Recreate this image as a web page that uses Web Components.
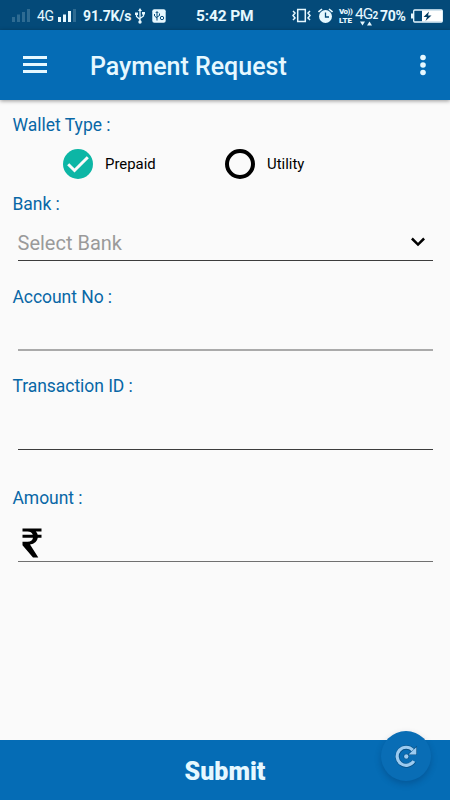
<!DOCTYPE html>
<html lang="en">
<head>
<meta charset="UTF-8">
<meta name="viewport" content="width=device-width, initial-scale=1.0">
<title>Payment Request</title>
<style>
    html, body {
        margin: 0;
        height: 100%;
        overflow: hidden;
        font-family: Roboto, "Noto Sans", sans-serif;
        background: #fafafa;
    }
</style>
</head>
<body>
<payment-page></payment-page>

<script>
class StatusBar extends HTMLElement {
    constructor() {
        super();
        this.attachShadow({ mode: 'open' });
    }

    connectedCallback() {
        this.shadowRoot.innerHTML = `
            <style>
                :host {
                    display: flex;
                    align-items: center;
                    box-sizing: border-box;
                    height: 30px;
                    padding: 1px 6px 0 12px;
                    background: #044a79;
                    color: #e6f8ff;
                    white-space: nowrap;
                }
                svg { display: block; flex: none; }
                span { flex: none; line-height: 16px; }
                .net { width: 21px; margin-left: 7px; font-size: 14px; letter-spacing: -0.3px; padding-top: 1px; }
                .speed { width: 49px; margin-left: 6px; font-size: 14px; letter-spacing: -0.15px; font-weight: 700; }
                .clock { width: 58px; margin-left: 30px; font-size: 15.5px; letter-spacing: -0.15px; font-weight: 700; }
                .volte {
                    display: flex;
                    flex-direction: column;
                    width: 15px;
                    margin-left: 6px;
                    font-size: 8px;
                    font-weight: 700;
                }
                .volte b { line-height: 9px; }
                .volte b:first-child { letter-spacing: -0.5px; }
                .data {
                    position: relative;
                    width: 23px;
                    height: 22px;
                    margin-left: 1px;
                    font-size: 15.5px;
                    line-height: 19px;
                    letter-spacing: -0.9px;
                }
                .data small { font-size: 10px; font-weight: 700; }
                .data svg { position: absolute; left: 5px; bottom: 1px; }
                .percent { width: 27px; margin-left: 2px; font-size: 14px; letter-spacing: -0.3px; font-weight: 700; }
            </style>
            <svg width="18" height="15" viewBox="0 0 18 15" fill="#2e6b92">
                <path d="M0 9h3v5H0zM5 6.500h3V14H5zM10 4h3v10h-3zM15 1h3v13h-3z"/>
            </svg>
            <span class="net">4G</span>
            <svg width="19" height="15" viewBox="0 0 19 15" fill="#e6f8ff">
                <path d="M0 9h3v5H0zM5 6.500h3V14H5zM10 3h3v11h-3z"/><path fill="#2e6b92" d="M15 1h3v13h-3z"/>
            </svg>
            <span class="speed">91.7K/s</span>
            <svg style="margin-left:3px" width="10" height="16" viewBox="0 0 10 16" fill="none" stroke="#e6f8ff" stroke-width="1.300">
                <path d="M5 2v12M1.500 6v2.500L5 11.500M8.500 5v3L5 10.500"/>
                <path fill="#e6f8ff" stroke="none" d="M5 0l2 3H3zM0 4.500h3v2.500H0zM7 4h3v2.500H7z"/>
                <circle cx="5" cy="14" r="1.700" fill="#e6f8ff" stroke="none"/>
            </svg>
            <svg style="margin-left:7px" width="14" height="14" viewBox="0 0 14 14">
                <rect x=".3" y=".3" width="13.400" height="13.400" rx="2" fill="#e6f8ff"/>
                <g fill="none" stroke="#044a79" stroke-width="1">
                    <path d="M5 3v8.500M2.500 5v2L5 9M7.500 4.500v2L5 8M3.800 4L5 2.500 6.200 4"/>
                    <circle cx="10" cy="9" r="1.700"/>
                </g>
            </svg>
            <span class="clock">5:42 PM</span>
            <svg style="margin-left:38px" width="19" height="15" viewBox="0 0 19 15" fill="none" stroke="#e6f8ff" stroke-width="1.500">
                <rect x="5.700" y="1.500" width="7.600" height="12"/>
                <path d="M1 3l2 2-2 2.500 2 2.500-2 2M18 3l-2 2 2 2.500-2 2.500 2 2"/>
            </svg>
            <svg style="margin-left:7px" width="15" height="16" viewBox="0 0 15 16">
                <circle cx="7.500" cy="8.500" r="6.500" fill="#e6f8ff"/>
                <path fill="none" stroke="#e6f8ff" stroke-width="1.600" d="M.5 4L4 1M14.500 4L11 1"/>
                <path fill="none" stroke="#044a79" stroke-width="1.300" d="M7.500 4.500v4.500h3.500"/>
            </svg>
            <span class="volte"><b>Vo))</b><b>LTE</b></span>
            <span class="data">4G<small>2</small>
                <svg width="12" height="5" viewBox="0 0 12 5" fill="#e6f8ff"><path d="M0 .5h5L2.500 4.500zM7 4.500h5L9.500 .5z"/></svg>
            </span>
            <span class="percent">70%</span>
            <svg style="margin-left:4px" width="32" height="14" viewBox="0 0 32 14">
                <path fill="#e6f8ff" d="M0 4.500h2.500v5H0z"/>
                <rect x="2.700" y="1" width="28.600" height="12" rx="1" fill="none" stroke="#e6f8ff" stroke-width="1.300"/>
                <path fill="#fff" d="M11 1.500h20v11H11z"/>
                <path fill="#043c62" d="M18 2.500L12.500 8H16l-1.500 4 6-5.500H17z"/>
            </svg>
        `;
    }
}
customElements.define('status-bar', StatusBar);

class AppBar extends HTMLElement {
    constructor() {
        super();
        this.attachShadow({ mode: 'open' });
    }

    connectedCallback() {
        this.shadowRoot.innerHTML = `
            <style>
                :host {
                    display: flex;
                    align-items: center;
                    box-sizing: border-box;
                    height: 70px;
                    padding: 0 24.5px 0 23px;
                    background: #056cb5;
                    color: #e6f8ff;
                    box-shadow: 0 1px 4px rgba(0, 0, 0, 0.4);
                    z-index: 1;
                }
                svg { display: block; flex: none; }
                h1 {
                    flex: 1;
                    margin: 3px 0 0 43px;
                    font-size: 25px;
                    line-height: 30px;
                    font-weight: 500;
                    white-space: nowrap;
                }
            </style>
            <svg width="24" height="18" viewBox="0 0 24 18" fill="#e6f8ff">
                <path d="M0 0h24v3H0zM0 7h24v3H0zM0 14h24v3H0z"/>
            </svg>
            <h1><slot></slot></h1>
            <svg width="6" height="22" viewBox="0 0 6 22" fill="#e6f8ff">
                <circle cx="3" cy="3.500" r="2.800"/><circle cx="3" cy="11" r="2.800"/><circle cx="3" cy="18.500" r="2.800"/>
            </svg>
        `;
    }
}
customElements.define('app-bar', AppBar);

class WalletOption extends HTMLElement {
    constructor() {
        super();
        this.attachShadow({ mode: 'open' });
    }

    connectedCallback() {
        const icon = this.hasAttribute('checked')
            ? '<circle cx="15" cy="15" r="15" fill="#0cb6a5"/><path fill="none" stroke="#fafafa" stroke-width="3" d="M5.200 15.200l6.300 6.300L24.800 8.200"/>'
            : '<circle cx="15" cy="15" r="13" fill="none" stroke="#000" stroke-width="4"/>';
        this.shadowRoot.innerHTML = `
            <style>
                :host {
                    display: flex;
                    align-items: center;
                    gap: 12.5px;
                    color: #000;
                    font-size: 14.9px;
                    line-height: 20px;
                }
                svg { display: block; }
            </style>
            <svg width="30" height="30" viewBox="0 0 30 30">${icon}</svg>
            <span><slot></slot></span>
        `;
    }
}
customElements.define('wallet-option', WalletOption);

class FormField extends HTMLElement {
    constructor() {
        super();
        this.attachShadow({ mode: 'open' });
    }

    connectedCallback() {
        this.shadowRoot.innerHTML = `
            <style>
                :host {
                    display: flex;
                    flex-direction: column;
                    box-sizing: border-box;
                }
                label {
                    margin-left: 12.5px;
                    font-size: 17.5px;
                    letter-spacing: -0.05px;
                    line-height: 20px;
                    color: #0867a6;
                }
                .control {
                    flex: 1;
                    display: flex;
                    align-items: flex-end;
                    justify-content: space-between;
                    box-sizing: border-box;
                    margin: 0 17.5px;
                    border-bottom: var(--line, 1px solid #3c3c3c);
                    font-size: 20px;
                    color: #9a9a9a;
                }
            </style>
            <label>${this.getAttribute('label')}</label>
            <div class="control"><slot></slot></div>
        `;
    }
}
customElements.define('form-field', FormField);

class SubmitBar extends HTMLElement {
    constructor() {
        super();
        this.attachShadow({ mode: 'open' });
    }

    connectedCallback() {
        this.shadowRoot.innerHTML = `
            <style>
                :host {
                    display: block;
                    position: relative;
                    height: 60px;
                    background: #056cb5;
                }
                .submit {
                    width: 100%;
                    height: 60px;
                    padding: 3px 0 0;
                    border: none;
                    background: none;
                    color: #e6f8ff;
                    font-family: inherit;
                    font-size: 25px;
                    font-weight: 900;
                }
                /* floating refresh button, overlaps the top edge of the bar */
                .refresh {
                    position: absolute;
                    top: -9px;
                    right: 19px;
                    width: 50px;
                    height: 50px;
                    display: flex;
                    align-items: center;
                    justify-content: center;
                    border-radius: 50%;
                    background: #096db5;
                    box-shadow: 0 3px 6px rgba(0, 30, 70, 0.25);
                }
            </style>
            <button class="submit"><slot></slot></button>
            <div class="refresh">
                <svg width="24" height="24" viewBox="0 0 24 24">
                    <g fill="#084f84" stroke="#084f84">
                        <path fill="none" stroke-width="4.400" d="M20 17.200A9 9 0 1 1 18.800 6.200"/>
                        <path stroke-width="1.200" d="M22.300 3.200v7.200h-7.800z"/>
                        <circle cx="12.300" cy="12.500" r="2.800" stroke="none"/>
                    </g>
                    <g fill="#9ccbf0">
                        <path fill="none" stroke="#9ccbf0" stroke-width="3.200" d="M19.800 17A9 9 0 1 1 18.800 6.200"/>
                        <path d="M22.300 3.200v7.200h-7.800z"/>
                        <circle cx="12.300" cy="12.500" r="2.200"/>
                    </g>
                </svg>
            </div>
        `;
    }
}
customElements.define('submit-bar', SubmitBar);

class PaymentPage extends HTMLElement {
    constructor() {
        super();
        this.attachShadow({ mode: 'open' });
    }

    connectedCallback() {
        this.shadowRoot.innerHTML = `
            <style>
                :host {
                    display: flex;
                    flex-direction: column;
                    height: 100vh;
                    background: #fafafa;
                }
                main {
                    flex: 1;
                    padding-top: 15px;
                }
                .title {
                    margin-left: 12.5px;
                    font-size: 17.5px;
                    line-height: 20px;
                    color: #0867a6;
                }
                .options {
                    display: grid;
                    grid-template-columns: 162px auto;
                    margin: 14px 0 15px 62.5px;
                }
                .bank { height: 67px; margin-bottom: 26px; }
                .account { height: 64px; margin-bottom: 25px; --line: 2px solid #aaa; }
                .transaction { height: 74px; margin-bottom: 38px; }
                .amount { height: 74px; --line: 1px solid #707070; }
                .placeholder { line-height: 24px; padding-bottom: 5px; }
                .chevron { margin: 0 8px 13.5px 0; }
                .rupee { margin: 0 0 3px 4.5px; }
            </style>
            <status-bar></status-bar>
            <app-bar>Payment Request</app-bar>
            <main>
                <div class="title">Wallet Type :</div>
                <div class="options">
                    <wallet-option checked>Prepaid</wallet-option>
                    <wallet-option>Utility</wallet-option>
                </div>
                <form-field class="bank" label="Bank :">
                    <span class="placeholder">Select Bank</span>
                    <svg class="chevron" width="14" height="10" viewBox="0 0 14 10">
                        <path fill="none" stroke="#000" stroke-width="2.500" d="M.9 1.500L7 7.600l6.100-6.100"/>
                    </svg>
                </form-field>
                <form-field class="account" label="Account No :"></form-field>
                <form-field class="transaction" label="Transaction ID :"></form-field>
                <form-field class="amount" label="Amount :">
                    <svg class="rupee" width="20" height="30" viewBox="0 0 20 30">
                        <path d="M.500 .500h19v3h-5.700q1.500 1.300 1.900 3.200h3.800v3h-3.700Q14.800 15.700 8 16.400L16.300 29.500H11L.500 17.200V13.700H5.500Q10.300 13.500 11 9.700H.500v-3H10.800Q9.500 3.500 5.500 3.500H.500z"/>
                    </svg>
                </form-field>
            </main>
            <submit-bar>Submit</submit-bar>
        `;
    }
}
customElements.define('payment-page', PaymentPage);
</script>
</body>
</html>
